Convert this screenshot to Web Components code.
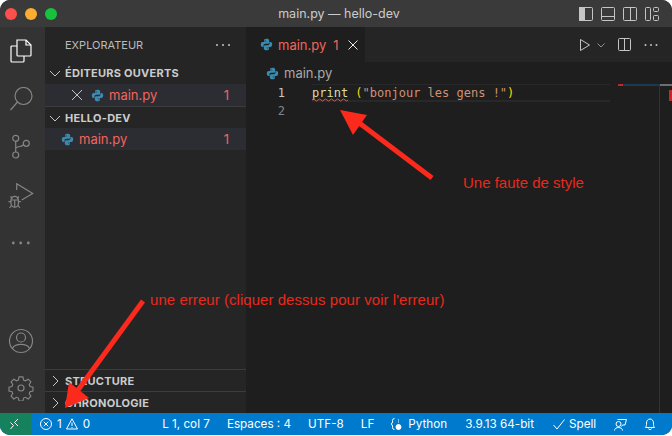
<!DOCTYPE html>
<html lang="fr">
<head>
<meta charset="utf-8">
<title>main.py — hello-dev</title>
<style>
    html, body { margin: 0; padding: 0; background: #ffffff; }
    body { width: 672px; height: 436px; overflow: hidden; font-family: Inter, "Liberation Sans", sans-serif; }
</style>
</head>
<body>
<vs-window>
    <title-bar slot="top">main.py — hello-dev</title-bar>
    <activity-bar slot="left"></activity-bar>
    <side-bar slot="side"></side-bar>
    <editor-pane slot="main"></editor-pane>
    <status-bar slot="bottom"></status-bar>
</vs-window>
<red-notes></red-notes>

<script>
const pyIcon = (size) => `<svg width="${size}" height="${size}" viewBox="0 0 16 16" style="display:block;flex:none">
    <path fill="#3b8ab0" d="M7.900 1C5.200 1 5 2.100 5 2.900V4.500h3.100V5H3.200C2 5 1 5.900 1 8c0 2.200.9 3.100 2 3.100h1.300V9.400c0-1.200 1-2.200 2.200-2.200h3c1 0 1.800-.8 1.800-1.800V2.900C11.300 1.800 10.200 1 7.900 1zM6.300 2.100a.6.6 0 1 1 0 1.200.6.6 0 0 1 0-1.200z"/>
    <path fill="#3b8ab0" d="M8.100 15c2.700 0 2.900-1.100 2.900-1.900v-1.600H7.900V11h4.900c1.200 0 2.200-.9 2.200-3 0-2.200-.9-3.100-2-3.100h-1.300v1.700c0 1.200-1 2.200-2.200 2.200h-3c-1 0-1.800.8-1.800 1.800v2.500C4.700 14.200 5.800 15 8.100 15zm1.600-1.100a.6.6 0 1 1 0-1.200.6.6 0 0 1 0 1.200z"/>
</svg>`;

const chevron = (dir) => `<svg width="16" height="16" viewBox="0 0 16 16" fill="none" stroke="#c5c5c5" stroke-width="1">
    <path d="${dir === 'down' ? 'M3 6l5 5 5-5' : 'M6 3l5 5-5 5'}"/>
</svg>`;

class VsWindow extends HTMLElement {
    constructor() {
        super();
        this.attachShadow({ mode: 'open' });
        this.shadowRoot.innerHTML = `
            <style>
                :host {
                    display: grid;
                    width: 672px;
                    height: 435px;
                    grid-template-columns: 45px 201px 426px;
                    grid-template-rows: 27px 386px 22px;
                    border-radius: 10px;
                    overflow: hidden;
                    background: #1e1e1e;
                }
                ::slotted([slot="top"]) { grid-column: 1 / -1; }
                ::slotted([slot="bottom"]) { grid-column: 1 / -1; }
            </style>
            <slot name="top"></slot>
            <slot name="left"></slot>
            <slot name="side"></slot>
            <slot name="main"></slot>
            <slot name="bottom"></slot>
        `;
    }
}

class TitleBar extends HTMLElement {
    constructor() {
        super();
        this.attachShadow({ mode: 'open' });
        this.shadowRoot.innerHTML = `
            <style>
                :host {
                    display: grid;
                    grid-template-columns: 1fr auto 1fr;
                    align-items: center;
                    height: 27px;
                    background: #3a3a3a;
                    color: #cccccc;
                    font-size: 12.500px;
                }
                .lights { display: flex; gap: 8px; padding: 1px 0 0 5px; }
                .lights i { width: 12px; height: 12px; border-radius: 50%; }
                .name { padding-left: 6px; }
                .tools { display: flex; justify-self: end; gap: 8px; padding-right: 13px; }
                svg { display: block; }
            </style>
            <div class="lights">
                <i style="background:#fd4f4c"></i>
                <i style="background:#fdac33"></i>
                <i style="background:#19c23e"></i>
            </div>
            <div class="name"><slot></slot></div>
            <div class="tools">
                <svg width="14" height="14" viewBox="0 0 14 14" fill="none" stroke="#c5c5c5"><rect x=".5" y=".5" width="13" height="13" rx="1"/><rect x="0" y="0" width="6" height="14" fill="#c5c5c5" stroke="none"/></svg>
                <svg width="14" height="14" viewBox="0 0 14 14" fill="none" stroke="#c5c5c5"><rect x=".5" y=".5" width="13" height="13" rx="1"/><path d="M0 9.500h14"/></svg>
                <svg width="14" height="14" viewBox="0 0 14 14" fill="none" stroke="#c5c5c5"><rect x=".5" y=".5" width="13" height="13" rx="1"/><path d="M7.500 0v14"/></svg>
                <svg width="14" height="14" viewBox="0 0 14 14" fill="none" stroke="#c5c5c5"><rect x=".5" y=".5" width="5" height="13" rx="1"/><rect x="8.500" y=".5" width="5" height="4" rx="1"/><rect x="8.500" y="8.500" width="5" height="5" rx="1"/></svg>
            </div>
        `;
    }
}

class ActivityBar extends HTMLElement {
    constructor() {
        super();
        this.attachShadow({ mode: 'open' });
        this.shadowRoot.innerHTML = `
            <style>
                :host {
                    display: flex;
                    flex-direction: column;
                    justify-content: space-between;
                    background: #333333;
                    padding-left: 9px;
                }
                .group { display: flex; flex-direction: column; }
                .top { padding-top: 12px; }
                .bottom { gap: 21px; padding-bottom: 12px; margin-left: -1px; }
                svg { display: block; fill: none; stroke: #858585; stroke-width: 1.200; }
            </style>
            <div class="group top">
                <svg width="24" height="24" viewBox="0 0 24 24" style="stroke:#fff">
                    <path d="M8 1H17L22 6V16Q22 17 21 17H9Q8 17 8 16Z"/>
                    <path d="M17 1v5h5"/>
                    <path d="M8 7H3Q2 7 2 8V22Q2 23 3 23H14Q15 23 15 22V17"/>
                </svg>
                <svg width="24" height="24" viewBox="0 0 24 24" style="margin-top:24px">
                    <circle cx="14.500" cy="9" r="8.500"/><path d="M8.500 15L1.500 23"/>
                </svg>
                <svg width="24" height="26" viewBox="0 0 24 26" style="margin-top:22px">
                    <circle cx="6.700" cy="5.300" r="3"/><circle cx="6.700" cy="22" r="3"/><circle cx="17.300" cy="10.300" r="3"/>
                    <path d="M6.700 8.300V19M6.700 15C10 12.500 12 14.500 14.700 11.500"/>
                </svg>
                <svg width="26" height="26" viewBox="0 0 26 26" style="margin:24px 0 0 -1px">
                    <path d="M8.700 7V.7L24.700 10.500 13.700 17"/>
                    <path d="M3 17a3.700 3.700 0 0 1 7.400 0v3.500a3.700 3.700 0 0 1-7.400 0zM3 17h7.400M6.700 17v7"/>
                    <path d="M2.500 13.500l2 2M10.900 13.500l-2 2M.5 18.700h2.500M10.400 18.700h2.500M1.500 25l2-2.500M11.900 25l-2-2.500"/>
                </svg>
                <svg width="24" height="24" viewBox="0 0 24 24" style="fill:#858585;stroke:none;margin-top:22px">
                    <circle cx="4.300" cy="12" r="1.400"/><circle cx="11.700" cy="12" r="1.400"/><circle cx="19.300" cy="12" r="1.400"/>
                </svg>
            </div>
            <div class="group bottom">
                <svg width="26" height="26" viewBox="0 0 26 26">
                    <circle cx="13" cy="13" r="11.500"/><circle cx="13" cy="9.500" r="4.500"/>
                    <path d="M4.500 20.500c2-5.500 15-5.500 17 0"/>
                </svg>
                <svg width="26" height="26" viewBox="0 0 26 26">
                    <path d="M11 1.500h4l.7 3.200 2 .8 2.800-1.700 2.800 2.800-1.700 2.800.8 2 3.100.7v4l-3.100.7-.8 2 1.700 2.800-2.800 2.800-2.800-1.700-2 .8-.7 3.100h-4l-.7-3.100-2-.8-2.800 1.700-2.800-2.800 1.700-2.800-.8-2-3.100-.7v-4l3.100-.7.8-2-1.700-2.800 2.800-2.800 2.800 1.700 2-.8z" transform="translate(.5 .5) scale(.96)"/>
                    <circle cx="13" cy="13" r="3"/>
                </svg>
            </div>
        `;
    }
}

class TreeRow extends HTMLElement {
    constructor() {
        super();
        this.attachShadow({ mode: 'open' });
        const close = this.hasAttribute('closable');
        this.shadowRoot.innerHTML = `
            <style>
                :host {
                    display: flex;
                    align-items: center;
                    height: 22px;
                    background: #2c2c33;
                    color: #f0655c;
                    font-size: 13px;
                    padding-right: 17px;
                    padding-left: ${close ? '24px' : '16px'};
                }
                .x { width: 16px; height: 16px; margin-right: 6px; flex: none; }
                .icon { display: flex; margin-right: 5px; }
                .name { flex: 1; }
            </style>
            ${close ? `<svg class="x" viewBox="0 0 16 16" fill="none" stroke="#c5c5c5"><path d="M3 3l10 10M13 3L3 13"/></svg>` : ''}
            <span class="icon">${pyIcon(13)}</span>
            <span class="name"><slot></slot></span>
            <span>1</span>
        `;
    }
}

class TreeSection extends HTMLElement {
    constructor() {
        super();
        this.attachShadow({ mode: 'open' });
        const open = this.hasAttribute('open');
        const line = !this.hasAttribute('first');
        this.shadowRoot.innerHTML = `
            <style>
                :host { display: block; }
                .head {
                    display: flex;
                    align-items: center;
                    gap: 2px;
                    height: 22px;
                    padding-left: 2px;
                    box-sizing: border-box;
                    ${line ? 'border-top: 1px solid #3c3c3c;' : ''}
                    color: #cccccc;
                    font-size: 11px;
                    font-weight: 700;
                    letter-spacing: .25px;
                }
                svg { display: block; }
            </style>
            <div class="head">${chevron(open ? 'down' : 'right')}<span>${this.getAttribute('label')}</span></div>
            <slot></slot>
        `;
    }
}

class SideBar extends HTMLElement {
    constructor() {
        super();
        this.attachShadow({ mode: 'open' });
        this.shadowRoot.innerHTML = `
            <style>
                :host {
                    display: flex;
                    flex-direction: column;
                    background: #252526;
                    min-height: 0;
                }
                .title {
                    display: flex;
                    align-items: center;
                    justify-content: space-between;
                    height: 35px;
                    padding: 0 16px 0 20px;
                    color: #bbbbbb;
                    font-size: 11px;
                }
                .spacer { flex: 1; }
                .dots { display: flex; gap: 4px; }
                .dots i { width: 2px; height: 2px; border-radius: 50%; background: #c5c5c5; }
            </style>
            <div class="title"><span>EXPLORATEUR</span><span class="dots"><i></i><i></i><i></i></span></div>
            <tree-section open first label="ÉDITEURS OUVERTS"><tree-row closable>main.py</tree-row></tree-section>
            <tree-section open label="HELLO-DEV"><tree-row>main.py</tree-row></tree-section>
            <div class="spacer"></div>
            <tree-section label="STRUCTURE"></tree-section>
            <tree-section label="CHRONOLOGIE"></tree-section>
        `;
    }
}

class EditorPane extends HTMLElement {
    constructor() {
        super();
        this.attachShadow({ mode: 'open' });
        this.shadowRoot.innerHTML = `
            <style>
                :host {
                    display: flex;
                    flex-direction: column;
                    background: #1e1e1e;
                    min-height: 0;
                }
                .tabs {
                    display: flex;
                    justify-content: space-between;
                    align-items: center;
                    height: 35px;
                    background: #252526;
                }
                .tab {
                    display: flex;
                    align-items: center;
                    height: 35px;
                    width: 119px;
                    box-sizing: border-box;
                    padding-left: 14px;
                    background: #1e1e1e;
                    color: #f0655c;
                    font-size: 13px;
                }
                .tab .name { margin: 0 7px 0 5px; }
                .tab svg.x { margin-left: 7px; }
                .actions { display: flex; align-items: center; padding-right: 14px; }
                .actions svg { display: block; fill: none; stroke: #c5c5c5; }
                .crumbs {
                    display: flex;
                    align-items: center;
                    gap: 5px;
                    height: 22px;
                    padding-left: 20px;
                    color: #a9a9a9;
                    font-size: 13px;
                }
                .code {
                    flex: 1;
                    font: 12px/18px "DejaVu Sans Mono", monospace;
                    position: relative;
                }
                .line { display: flex; height: 18px; width: 364px; }
                .num { width: 39px; text-align: right; color: #858585; flex: none; }
                .cur .num { color: #c6c6c6; }
                .src { margin-left: 27px; flex: 1; box-sizing: border-box; white-space: pre; color: #ce9178; }
                .cur .src { border-top: 1px solid #282828; border-bottom: 2px solid #282828; line-height: 16px; }
                .fn { color: #dcdcaa; }
                .par { color: #ffd700; }
                .squig { position: absolute; left: 66px; top: 14px; }
                .ruler { position: absolute; right: 0; top: 0; bottom: 0; width: 13px; border-left: 1px solid #333; box-sizing: border-box; }
                .ruler .a { position: absolute; left: 0; right: 0; top: 0; height: 2px; background: #6e6e6e; }
                .ruler .b { position: absolute; right: 0; top: 6px; width: 3px; height: 11px; background: #c8252a; }
                .mini { position: absolute; left: 372px; top: 0; width: 41px; height: 2px; background: #1b3a52; }
                .mini i { display: block; width: 5px; height: 2px; background: #c8252a; }
            </style>
            <div class="tabs">
                <div class="tab">
                    ${pyIcon(13)}
                    <span class="name">main.py</span><span>1</span>
                    <svg class="x" width="14" height="14" viewBox="0 0 14 14" fill="none" stroke="#e8e8e8"><path d="M2.500 2.500l9 9M11.500 2.500l-9 9"/></svg>
                </div>
                <div class="actions">
                    <svg width="14" height="16" viewBox="0 0 14 16"><path d="M2.500 2.500v11l9-5.500z"/></svg>
                    <svg width="12" height="16" viewBox="0 0 12 16" style="margin:0 11px 0 3px"><path d="M2.500 6.500l3.500 3.500 3.500-3.500" stroke="#8f8f8f"/></svg>
                    <svg width="14" height="14" viewBox="0 0 14 14" style="margin-right:12px"><rect x=".5" y=".5" width="12" height="12" rx="1"/><path d="M6.500 0v13"/></svg>
                    <svg width="14" height="14" viewBox="0 0 14 14" style="fill:#c5c5c5;stroke:none"><circle cx="1.500" cy="7" r="1"/><circle cx="7" cy="7" r="1"/><circle cx="12.500" cy="7" r="1"/></svg>
                </div>
            </div>
            <div class="crumbs">${pyIcon(13)}<span>main.py</span></div>
            <div class="code">
                <div class="line cur"><span class="num">1</span><span class="src"><span class="fn">print</span> <span class="par">(</span>"bonjour les gens !"<span class="par">)</span></span></div>
                <div class="line"><span class="num">2</span></div>
                <svg class="squig" width="36" height="4" viewBox="0 0 36 4" fill="none" stroke="#f14c4c"><path d="M0 2q1.500-2 3 0t3 0 3 0 3 0 3 0 3 0 3 0 3 0 3 0 3 0 3 0 3 0"/></svg>
                <div class="mini"><i></i></div>
                <div class="ruler"><span class="a"></span><span class="b"></span></div>
            </div>
        `;
    }
}

class StatusBar extends HTMLElement {
    constructor() {
        super();
        this.attachShadow({ mode: 'open' });
        this.shadowRoot.innerHTML = `
            <style>
                :host {
                    display: flex;
                    align-items: center;
                    height: 22px;
                    background: #007acc;
                    color: #ffffff;
                    font-size: 11.700px;
                    white-space: nowrap;
                }
                .remote { width: 31px; height: 22px; box-sizing: border-box; padding-left: 10px; background: #16825d; display: flex; align-items: center; }
                .item { display: flex; align-items: center; }
                svg { display: block; fill: none; stroke: #fff; flex: none; }
            </style>
            <div class="remote">
                <svg width="12" height="12" viewBox="0 0 12 12"><path d="M.5 4.500l3 3-3 3.500M8 1L4.500 4.500 8 8"/></svg>
            </div>
            <div class="item" style="margin-left:9px">
                <svg width="12" height="12" viewBox="0 0 12 12"><circle cx="6" cy="6" r="5.500"/><path d="M3.800 3.800l4.400 4.400M8.200 3.800L3.800 8.200"/></svg>
                <span style="margin-left:5px">1</span>
                <svg width="12" height="12" viewBox="0 0 12 12" style="margin-left:4px"><path d="M6 .8L11.500 11H.5zM6 4.500v3.500M6 9v1"/></svg>
                <span style="margin-left:5px">0</span>
            </div>
            <div class="item" style="margin-left:72px">L 1, col 7</div>
            <div class="item" style="margin-left:17px">Espaces : 4</div>
            <div class="item" style="margin-left:17px">UTF-8</div>
            <div class="item" style="margin-left:17px">LF</div>
            <div class="item" style="margin-left:16px">
                <svg width="12" height="14" viewBox="0 0 12 14"><path d="M4.500 1.500Q2.500 1.500 2.500 3.500v1.500Q2.500 6.500 1 7 2.500 7.500 2.500 9v1.500q0 2 2 2"/><path d="M8.500 2.500v3" stroke-dasharray="1 1"/><circle cx="8.500" cy="10" r="2.500" fill="#fff"/></svg>
                <span style="margin-left:6px">Python</span>
            </div>
            <div class="item" style="margin-left:18px">3.9.13 64-bit</div>
            <div class="item" style="margin-left:19px">
                <svg width="12" height="12" viewBox="0 0 12 12"><path d="M.5 7l3.500 4L11.500 1.500"/></svg><span style="margin-left:4px">Spell</span>
            </div>
            <div class="item" style="margin-left:18px">
                <svg width="13" height="13" viewBox="0 0 13 13"><path d="M3.500 1.500h9L11 7H8.500L7.500 8.500"/><circle cx="4.500" cy="6" r="2.500"/><path d="M.5 12.500c0-4 8-4 8 0"/></svg>
            </div>
            <div class="item" style="margin-left:16px">
                <svg width="14" height="14" viewBox="0 0 14 14"><path d="M2.500 10.500c1-1 1-2.500 1-4.500 0-2.200 1.500-4 3.500-4s3.500 1.800 3.500 4c0 2 0 3.500 1 4.500zM5.500 11.500c0 1.500 3 1.500 3 0"/></svg>
            </div>
        `;
    }
}

class RedNotes extends HTMLElement {
    constructor() {
        super();
        this.attachShadow({ mode: 'open' });
        this.shadowRoot.innerHTML = `
            <style>
                :host { position: absolute; left: 0; top: 0; width: 672px; height: 436px; pointer-events: none; }
                svg { position: absolute; left: 0; top: 0; }
                p { position: absolute; margin: 0; color: #e8291c; font: 15px "Liberation Sans", Arial, sans-serif; white-space: nowrap; }
            </style>
            <svg width="672" height="436" viewBox="0 0 672 436">
                <path d="M432 178L358 122" stroke="#fb2a1c" stroke-width="5" fill="none"/>
                <path d="M340 110L367 115L353 135Z" fill="#fb2a1c"/>
                <path d="M143 301L78 390" stroke="#fb2a1c" stroke-width="5" fill="none"/>
                <path d="M65 408L69 382L89 398Z" fill="#fb2a1c"/>
            </svg>
            <p style="left:463px;top:174px">Une faute de style</p>
            <p style="left:150px;top:291px;letter-spacing:.05px">une erreur (cliquer dessus pour voir l'erreur)</p>
        `;
    }
}

customElements.define('vs-window', VsWindow);
customElements.define('title-bar', TitleBar);
customElements.define('activity-bar', ActivityBar);
customElements.define('tree-row', TreeRow);
customElements.define('tree-section', TreeSection);
customElements.define('side-bar', SideBar);
customElements.define('editor-pane', EditorPane);
customElements.define('status-bar', StatusBar);
customElements.define('red-notes', RedNotes);
</script>
</body>
</html>
